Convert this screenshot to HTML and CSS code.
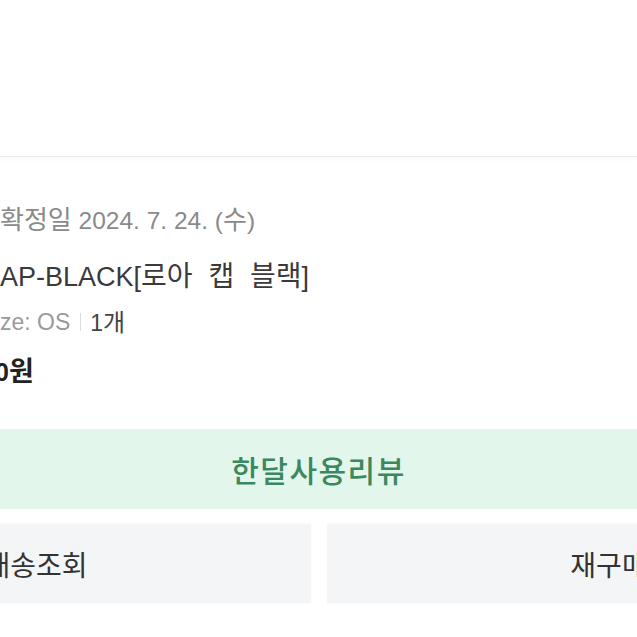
FILE: index.html
```html
<!DOCTYPE html>
<html lang="ko">
<head>
<meta charset="utf-8">
<link rel="stylesheet" href="styles.css">
</head>
<body>
<div class="page">
  <div class="top"></div>
  <div class="info">
    <div class="date"><span class="ko">확정일</span> 2024. 7. 24. (<span class="ko">수</span>)</div>
    <div class="name">AP-BLACK[<span class="ko">로아 캡 블랙</span>]</div>
    <div class="opt"><span class="optk">ze: OS</span><span class="sep"></span><span class="qty">1<span class="ko">개</span></span></div>
    <div class="price">0<span class="ko">원</span></div>
  </div>
  <div class="review">한달사용리뷰</div>
  <div class="btns">
    <div class="btn left">배송조회</div>
    <div class="btn right">재구매</div>
  </div>
</div>
</body>
</html>
```

FILE: styles.css
```css
html, body {
  margin: 0;
  padding: 0;
  background: #fff;
}
.page {
  width: 637px;
  height: 637px;
  overflow: hidden;
  font-family: "Liberation Sans", "Noto Sans CJK KR", sans-serif;
}
.top {
  height: 156px;
  border-bottom: 1px solid #ececec;
  box-shadow: 0 2px 5px rgba(0, 0, 0, 0.035);
}
.info {
  display: flex;
  flex-direction: column;
  padding-top: 44px;
}
.date, .name, .opt, .price {
  height: 34px;
  line-height: 34px;
  white-space: nowrap;
}
.ko {
  font-family: "Noto Sans CJK KR", sans-serif;
  font-size: 26px;
}
.date {
  font-size: 24.5px;
  color: #8a8a8a;
}
.name {
  margin-top: 22px;
  font-size: 27px;
  color: #3a3a3a;
}
.name .ko {
  font-size: 28px;
  word-spacing: 8px;
}
.opt {
  margin-top: 14px;
  font-size: 23px;
  color: #9a9a9a;
  display: flex;
  align-items: center;
}
.sep {
  display: inline-block;
  width: 1px;
  height: 18px;
  background: #dcdcdc;
  margin: 0 9px 0 10px;
}
.qty {
  color: #444;
}
.qty .ko {
  font-size: 24px;
}
.price {
  margin-top: 14px;
  margin-left: -5px;
  font-size: 25px;
  font-weight: bold;
  color: #222;
}
.price .ko {
  font-size: 27px;
}
.review {
  margin-top: 42px;
  height: 80px;
  background: #e2f6ec;
  display: flex;
  align-items: center;
  justify-content: center;
  font-family: "Noto Sans CJK KR", sans-serif;
  font-size: 30px;
  font-weight: 500;
  letter-spacing: 1.5px;
  color: #3b8860;
}
.btns {
  display: flex;
  gap: 16px;
  margin-top: 15px;
  margin-left: -239px;
}
.btn {
  flex: none;
  height: 79px;
  background: #f3f5f7;
  box-shadow: 0 0 3px rgba(0, 0, 0, 0.03);
  display: flex;
  align-items: center;
  justify-content: center;
  font-family: "Noto Sans CJK KR", sans-serif;
  font-size: 28px;
  color: #333;
}
.btn.left {
  width: 550px;
}
.btn.right {
  width: 564px;
}
```
